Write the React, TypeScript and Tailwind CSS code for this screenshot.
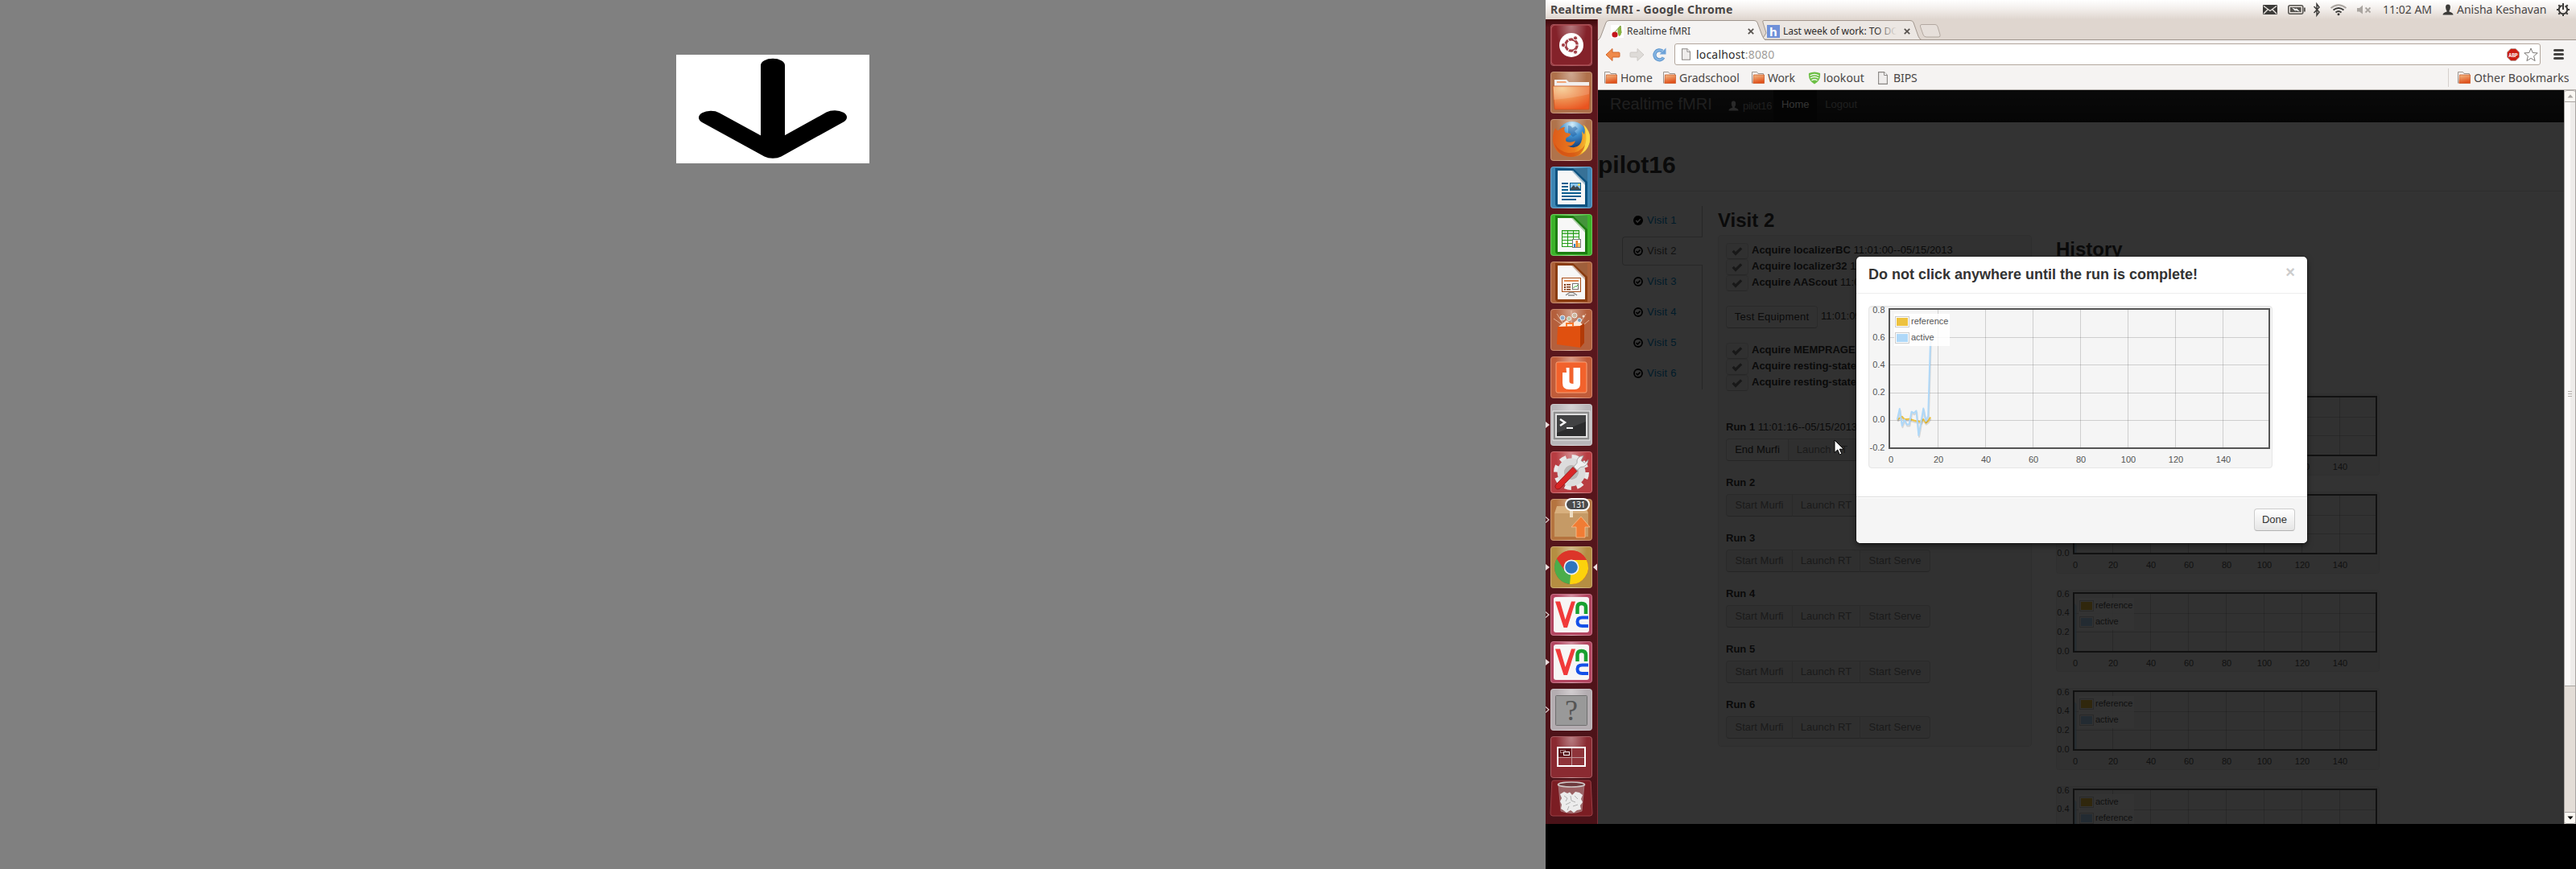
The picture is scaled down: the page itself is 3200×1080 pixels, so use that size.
import React from "react";

type Kids = { children?: React.ReactNode };

/* ---------- launcher ---------- */

function Tile({
  bg,
  children,
  pip,
  active,
}: Kids & { bg: string; pip?: "full" | "hollow"; active?: boolean }) {
  return (
    <div className="relative flex h-[59px] w-[64px] shrink-0 items-start">
      <div className="flex h-[52px] w-[6px] items-center">
        {pip && (
          <svg width="6" height="10" viewBox="0 0 6 10">
            {pip === "full" ? (
              <path d="M0 1 L5 5 L0 9Z" fill="#e8dcdc" />
            ) : (
              <path d="M0 1.5 L4 5 L0 8.5" fill="none" stroke="#e0d4d4" strokeWidth="1.2" />
            )}
          </svg>
        )}
      </div>
      <div className={"relative h-[52px] w-[52px] overflow-hidden rounded-[4px] " + bg}>
        <div className="absolute inset-0 rounded-[4px] border border-white/25 bg-[radial-gradient(ellipse_at_50%_0%,rgba(255,255,255,0.4),rgba(255,255,255,0)_55%)]" />
        <svg className="relative block" width="52" height="52" viewBox="0 0 52 52">
          {children}
        </svg>
      </div>
      {active && (
        <svg className="mt-[21px] ml-px" width="5" height="10" viewBox="0 0 5 10">
          <path d="M5 0.5 L0 5 L5 9.5Z" fill="#e8dcdc" />
        </svg>
      )}
    </div>
  );
}

function OfficePage({ color, children }: Kids & { color: string }) {
  return (
    <>
      <path d="M6 2H46V50H10Q6 50 6 46Z" fill={color} />
      <path d="M28 2H46V19Z" fill="#fff" opacity="0.18" />
      <path d="M9 5H28L43 20V47H9Z" fill="#f7f7f7" />
      <path d="M28 5L43 20L43 23L26 5Z" fill={color} opacity="0.35" />
      {children}
    </>
  );
}

function Vnc() {
  return (
    <>
      <rect x="4" y="4" width="44" height="44" rx="3" fill="#f7f5f5" />
      <path d="M6 9.5H12L18.500 32L26 9.500H31L21 42H16.500Z" fill="#f13a3a" />
      <path d="M33.500 25V17Q33.500 12 38.500 12Q44 12 44 17V25" fill="none" stroke="#18a030" strokeWidth="4.500" />
      <path d="M47 29.500H39.500Q33.500 29.500 33.500 34.500Q33.500 40 39.500 40H47" fill="none" stroke="#1450e8" strokeWidth="4" />
    </>
  );
}

function Launcher() {
  return (
    <div className="flex h-[1000px] w-[65px] flex-col border-r border-[#7b2d36] bg-[#56161c] bg-[linear-gradient(to_bottom,#3c080c,#5b161c_10px,#59171d_50%,#4a1218)] pt-[6px]">
      <Tile bg="bg-[#84222a]">
        <rect x="1" y="1" width="50" height="50" rx="5" fill="none" stroke="#a84a50" strokeWidth="1.500" />
        <circle cx="26" cy="26" r="15" fill="#fff" />
        <circle cx="26" cy="26" r="7.200" fill="none" stroke="#a24047" strokeWidth="3.200" />
        <path d="M26 26L20.500 16.500M26 26H37M26 26L20.500 35.500" stroke="#fff" strokeWidth="1.200" />
        <circle cx="26" cy="26" r="5" fill="#fff" />
        <circle cx="16" cy="26" r="2.600" fill="#a24047" stroke="#fff" strokeWidth="1" />
        <circle cx="31" cy="17.300" r="2.600" fill="#a24047" stroke="#fff" strokeWidth="1" />
        <circle cx="31" cy="34.700" r="2.600" fill="#a24047" stroke="#fff" strokeWidth="1" />
      </Tile>
      <Tile bg="bg-[#b0714b]">
        <path d="M5 10H20L23 13H48V20H5Z" fill="#f2efee" />
        <path d="M8 12H19L20 14H8Z" fill="#f1a677" />
        <path d="M3 18H49L48 46Q48 47 47 47H6Q5 47 5 46Z" fill="url(#folderBig)" stroke="#c9541f" strokeWidth="0.800" />
        <path d="M3.500 18.500H48.500L48 28Q28 33 4 35Z" fill="#fff" opacity="0.15" />
        <defs>
          <radialGradient id="folderBig" cx="0.25" cy="0.1" r="1">
            <stop offset="0" stopColor="#f6c98c" />
            <stop offset="0.5" stopColor="#ee8e50" />
            <stop offset="1" stopColor="#ea5420" />
          </radialGradient>
        </defs>
      </Tile>
      <Tile bg="bg-[#b0734b]">
        <defs>
          <radialGradient id="ffGlobe" cx="0.5" cy="0.1" r="0.9">
            <stop offset="0" stopColor="#d5eefa" />
            <stop offset="0.45" stopColor="#3f8fce" />
            <stop offset="1" stopColor="#0a2b66" />
          </radialGradient>
          <linearGradient id="ffFox" x1="0" y1="0" x2="1" y2="0.1">
            <stop offset="0" stopColor="#dd5a1a" />
            <stop offset="0.65" stopColor="#ea7a1e" />
            <stop offset="1" stopColor="#f8c630" />
          </linearGradient>
        </defs>
        <circle cx="27" cy="21" r="18" fill="url(#ffGlobe)" />
        <path d="M22 8q4 0 5 3l4-2 3 3-4 3 3 4-5 3-6-5z" fill="#0f4a92" opacity="0.4" />
        <path d="M6 11Q8 15 10 14Q13 10 18 10Q16 14 19 17L25 18Q25 21 20 23Q18 26 20 28Q25 30 31 27Q28 35 21 33Q30 38 36 32Q41 26 39 15L42 19Q44 13 41 7Q52 17 48 31Q43 46 26 47Q9 47 4 32Q1 21 6 11Z" fill="url(#ffFox)" />
        <path d="M41 7Q52 17 48 31Q45 40 37 43Q44 34 44.500 25Q44.500 14 41 7Z" fill="#fbd94a" />
        <path d="M5 30Q10 40 22 42Q36 43 43 32Q40 47 25 47Q9 46 5 30Z" fill="#c8400e" opacity="0.5" />
      </Tile>
      <Tile bg="bg-[#3e86b4]">
        <OfficePage color="#0c5280">
          <g fill="#0c5f90">
            <rect x="14" y="20" width="8" height="2" /><rect x="14" y="24" width="8" height="2" /><rect x="14" y="28" width="8" height="2" />
            <rect x="14" y="32" width="24" height="2" /><rect x="14" y="36" width="24" height="2" /><rect x="14" y="40" width="18" height="2" />
            <rect x="24" y="20" width="14" height="10" />
          </g>
          <rect x="25" y="21" width="12" height="8" fill="#8cc5ec" />
          <path d="M25 29V27L29 23L31 26L33 24L37 28V29Z" fill="#3f4a50" />
          <circle cx="35.500" cy="22.500" r="1.500" fill="#f4dc5c" />
        </OfficePage>
      </Tile>
      <Tile bg="bg-[#3cb32a]">
        <OfficePage color="#1c7d10">
          <rect x="14" y="20" width="22" height="21" fill="#1f9a12" />
          <g fill="#fff">
            {[21, 25, 29, 33, 37].map((y, r) => (
              <g key={y}>
                <rect x="15" y={y} width="6" height="3" opacity={r ? 1 : 0.7} /><rect x="22" y={y} width="6" height="3" opacity={r ? 1 : 0.7} /><rect x="29" y={y} width="6" height="3" opacity={r ? 1 : 0.7} />
              </g>
            ))}
          </g>
          <rect x="27.500" y="31.500" width="10" height="10" fill="#fff" stroke="#777" />
          <rect x="29" y="37" width="2" height="4" fill="#1d86c8" /><rect x="31.500" y="33" width="2.500" height="8" fill="#e8802a" /><rect x="34.500" y="36" width="2" height="5" fill="#e8b02a" />
        </OfficePage>
      </Tile>
      <Tile bg="bg-[#ad6139]">
        <OfficePage color="#8a3c10">
          <rect x="14.500" y="20.500" width="23" height="17" fill="#fdf3ec" stroke="#a8501c" />
          <rect x="17" y="23" width="18" height="2" fill="#e08a50" />
          <g fill="#7c3a18"><rect x="17" y="28" width="2" height="2" /><rect x="17" y="31" width="2" height="2" /><rect x="17" y="34" width="2" height="1.500" /><rect x="20" y="28" width="5" height="1.500" /><rect x="20" y="31" width="5" height="1.500" /><rect x="20" y="34" width="5" height="1.500" /></g>
          <rect x="27.500" y="27.500" width="7" height="7" fill="#fff" stroke="#777" />
          <path d="M28.500 33L31 30.500L32 31.500L34 29" stroke="#28a028" fill="none" />
          <path d="M19 42L24 38.500H28L33 42M22 42h8" stroke="#8a8a8a" fill="none" strokeWidth="1.500" />
        </OfficePage>
      </Tile>
      <Tile bg="bg-[#b4603d]">
        <path d="M8 6L20 24M44 6L34 22M26 2V22M4 12L18 22M48 14L36 24" stroke="#f3d2bb" strokeWidth="1" opacity="0.7" />
        <path d="M10 22L20 14L26 19L34 13L42 22Z" fill="#fde9d8" />
        <circle cx="15" cy="11" r="3" fill="#8aa9c8" stroke="#eee" /><circle cx="23" cy="12" r="2.500" fill="#b8c8a8" stroke="#eee" />
        <circle cx="30" cy="8" r="3" fill="#cdb8a0" stroke="#eee" /><circle cx="36" cy="14" r="2.500" fill="#7fa0b8" stroke="#eee" /><circle cx="41" cy="9" r="1.500" fill="#f0e0d0" />
        <path d="M9 22L37 21L42 18V42L37 48L8 44Z" fill="#e0500f" />
        <path d="M37 21L42 18V42L37 48Z" fill="#b23a08" />
        <path d="M20 22V18H28V22" stroke="#fa7a2c" strokeWidth="2" fill="none" />
      </Tile>
      <Tile bg="bg-[#c05c3a]">
        <rect x="7" y="7" width="38" height="38" rx="2" fill="#f2622c" stroke="#f9a074" />
        <path d="M19.500 14H23.500V31Q23.500 34 28.500 34V14H37V34Q37 41 30 41H23Q15 41 15 33V20H20Z" fill="#fff" />
      </Tile>
      <Tile bg="bg-[#b9b6b9]" pip="full">
        <rect x="3" y="9" width="46" height="36" fill="#8d8d8d" stroke="#eee" />
        <rect x="6" y="12" width="40" height="30" fill="#dedede" />
        <rect x="8" y="14" width="36" height="26" fill="#2c2d2e" />
        <path d="M8 14H44V22L8 36Z" fill="#fff" opacity="0.1" />
        <path d="M12 19L18 23L12 27" fill="none" stroke="#f4f4f4" strokeWidth="2.500" />
        <rect x="20" y="29" width="8" height="2" fill="#f4f4f4" />
      </Tile>
      <Tile bg="bg-[#b83d42]">
        <circle cx="26" cy="26" r="19" fill="none" stroke="#e8e8e8" strokeWidth="6" strokeDasharray="8 6.920" />
        <circle cx="26" cy="26" r="13" fill="none" stroke="#dcdcdc" strokeWidth="9" />
        <circle cx="26" cy="26" r="9" fill="#b9b7b5" />
        <path d="M7 41L28 19.500L33 24.500L12 46Q8 48 6.500 45.500Q5 43.500 7 41Z" fill="#d82626" stroke="#8c1414" strokeWidth="0.800" />
        <path d="M29 19L33 23.500L37.500 19.500Q46 19.500 47 10.500L42.500 14.500L38 11.500L41 5.500Q32 6 33 14.500Z" fill="#f0f0f0" stroke="#999" strokeWidth="0.800" />
      </Tile>
      <div className="relative">
        <Tile bg="bg-[#b5743f]" pip="hollow">
          <path d="M8 9H44L47 18H5Z" fill="#d8b07e" />
          <rect x="5" y="18" width="42" height="29" fill="#c59a66" />
          <rect x="24" y="9" width="4" height="14" fill="#eddcc0" />
          <path d="M38 22L49 35H43V48H32V35H26Z" fill="#f17c34" stroke="#fbc090" strokeWidth="0.800" />
        </Tile>
        <div className="absolute top-[-1px] left-[24px] flex h-[16px] w-[31px] items-center justify-center rounded-full border-2 border-white bg-[#4b4b4d] pl-[3px] font-['Noto_Sans',sans-serif] text-[10px] leading-none text-white">
          131
        </div>
      </div>
      <Tile bg="bg-[#b58e42]" pip="full" active>
        <circle cx="26" cy="26" r="21" fill="#dc3529" />
        <path d="M26 26L7.800 15.500A21 21 0 0 0 24 46.900L35 31Z" fill="#4bad4a" />
        <path d="M26 26L24 46.900A21 21 0 0 0 44.900 17L26 17Z" fill="#fcd20c" />
        <path d="M26 17H44.900A21 21 0 0 0 7.800 15.500L17.500 30Z" fill="#dc3529" />
        <circle cx="26" cy="26" r="9.500" fill="#eef2f6" />
        <circle cx="26" cy="26" r="7.800" fill="#2f74bd" />
      </Tile>
      <Tile bg="bg-[#b34560]" pip="hollow"><Vnc /></Tile>
      <Tile bg="bg-[#b34560]" pip="full"><Vnc /></Tile>
      <Tile bg="bg-[#b4adb1]" pip="hollow">
        <rect x="6.500" y="8.500" width="39" height="37" rx="1" fill="#999" stroke="#6f6f6f" />
        <text x="26" y="39" textAnchor="middle" className="font-['Liberation_Serif',serif] text-[36px]" fill="#555">?</text>
      </Tile>
      <div className="h-[54px] overflow-hidden">
        <Tile bg="bg-[#8a2a31]">
          <rect x="9" y="14" width="34" height="23" fill="#8f343a" stroke="#fff" strokeWidth="2" />
          <rect x="10" y="15" width="15.500" height="10.500" fill="#5a1218" />
          <path d="M26.500 15V36M10 26.500H42" stroke="#c0989a" strokeWidth="1" />
          <rect x="12.500" y="17.500" width="6" height="3" fill="none" stroke="#a57c7e" />
          <rect x="16.500" y="19.500" width="7" height="4" fill="#5a1218" stroke="#fff" />
        </Tile>
      </div>
      <svg className="ml-[5px] block shrink-0" width="54" height="46" viewBox="0 0 54 46">
        <path d="M5 1H49Q51 1 51.200 3L53 42Q53 45 50 45H4Q1 45 1 42L2.800 3Q3 1 5 1Z" fill="#7b1d23" stroke="#9a4046" />
        <path d="M11 6L14 39Q27 44 40 39L43 6Z" fill="#b9a4a3" opacity="0.5" stroke="#ddd" strokeWidth="0.800" />
        <path d="M13 18L18 15L22 17L25 15.500L28 19L32 15L37 16L41 19L39 24L41 28L38 32L39 37L34 38L30 41L26 38L21 41L17 38L14 36L15 31L13 27L15 23Z" fill="#ececec" />
        <path d="M18 20l4 3l-2 4M31 20l4 4M20 31l6-3M29 33l6-2M22 38l2-5M26 20l1 6l5 2" stroke="#b0b0b0" fill="none" />
        <ellipse cx="27" cy="6" rx="16.500" ry="3" fill="#6d3a3d" stroke="#cfc8c6" strokeWidth="1.600" />
      </svg>
    </div>
  );
}

/* ---------- top panel ---------- */

function TopPanel() {
  return (
    <div className="flex h-[24px] w-full items-center bg-[linear-gradient(to_bottom,#ffffff,#f3efec_45%,#dfd6cf)] font-['Noto_Sans',sans-serif] text-[14px] leading-none text-[#4a4746]">
      <div className="ml-[6px] text-[14px] font-bold tracking-[0.280px] whitespace-nowrap">Realtime fMRI - Google Chrome</div>
      <svg className="ml-auto" width="140" height="24" viewBox="0 0 140 24">
        <rect x="1" y="6" width="18" height="12" rx="1" fill="#3c3b39" />
        <path d="M2 7.500L10 13.500L18 7.500M2 17L7 12M18 17L13 12" stroke="#eee9e5" strokeWidth="1.300" fill="none" />
        <rect x="32.800" y="6.800" width="18" height="10.400" rx="2" fill="#e8e2dd" stroke="#55534f" strokeWidth="1.500" />
        <rect x="35" y="9" width="13.500" height="6" fill="#55534f" />
        <rect x="52" y="9.500" width="1.800" height="5" fill="#55534f" />
        <path d="M37 9.500L43 11.500L42 9.500L47 14.500L41 12.500L42 14.500Z" fill="#fff" />
        <path d="M64.500 8L71 15L68 19V5L71 9L64.500 16" fill="none" stroke="#3c3b39" strokeWidth="1.500" />
        <path d="M85.500 10Q95 2.500 104.500 10" fill="none" stroke="#aaa5a0" strokeWidth="1.800" />
        <path d="M88.500 12.500Q95 7.500 101.500 12.500M91.500 15.500Q95 12.500 98.500 15.500" fill="none" stroke="#3c3b39" strokeWidth="1.800" />
        <circle cx="95" cy="17.800" r="1.500" fill="#3c3b39" />
        <path d="M118 10H121L125 6.500V17.500L121 14.500H118Z" fill="#aaa5a0" />
        <path d="M128.500 9.500L134.500 15.500M134.500 9.500L128.500 15.500" stroke="#aaa5a0" strokeWidth="1.800" />
      </svg>
      <span className="ml-[10px] w-[74px] whitespace-nowrap">11:02 AM</span>
      <svg width="14" height="14" viewBox="0 0 14 14" className="mr-[4px]">
        <path d="M7 0.500C9.500 0.500 10.200 2.500 9.800 5Q9.500 7.500 8.500 8.500V9.500Q13.500 11 13.500 13.500H0.500Q0.500 11 5.500 9.500V8.500Q4.500 7.500 4.200 5C3.800 2.500 4.500 0.500 7 0.500Z" fill="#3c3b39" />
      </svg>
      <span className="w-[124px] whitespace-nowrap">Anisha Keshavan</span>
      <svg className="mr-[8px]" width="16" height="16" viewBox="0 0 16 16">
        <circle cx="8" cy="8" r="5.200" fill="none" stroke="#3c3b39" strokeWidth="2" strokeDasharray="28.600 4" strokeDashoffset="-26.500" />
        <path d="M8 0V8" stroke="#3c3b39" strokeWidth="2" />
        <path d="M0 8H3M13 8H16M8 13V16M2.300 2.300L4.300 4.300M13.700 2.300L11.700 4.300M2.300 13.700L4.300 11.700M13.700 13.700L11.700 11.700" stroke="#3c3b39" strokeWidth="2" />
      </svg>
    </div>
  );
}

/* ---------- browser chrome ---------- */

function TabClose() {
  return (
    <svg width="8" height="8" viewBox="0 0 8 8" className="shrink-0">
      <path d="M0.800 0.800L7.200 7.200M7.200 0.800L0.800 7.200" stroke="#55504c" strokeWidth="1.700" />
    </svg>
  );
}

function TabStrip() {
  return (
    <div className="relative h-[26px] w-full bg-[#dfd6cf] font-['Noto_Sans',sans-serif] text-[12px] text-[#3b3937]">
      <svg className="absolute inset-0" width="1215" height="26" viewBox="0 0 1215 26">
        <path d="M0 25.500H1215" stroke="#9f958d" />
        <path d="M196 25L204 25L209 17L205 4Q204 1.500 206 1.500H388Q391 1.500 392 4L398 21Q399.500 25 402 25.500Z" fill="#ece7e3" stroke="#a3988f" />
        <path d="M402 6.500H419Q421 6.500 422 9L425 19Q426 22 423 22H408Q405 22 404 19L400.500 9Q400 6.500 402 6.500Z" fill="#e6dfda" stroke="#b3a9a1" />
        <path d="M0 26Q3 24 4 20L10 4Q11 1.500 14 1.500H194Q197 1.500 198 4L204 20Q206 25.500 209 26Z" fill="#f5f3f2" stroke="#9f958d" />
        <rect x="1" y="25" width="206" height="1" fill="#f5f3f2" />
      </svg>
      <div className="relative flex h-full items-center pt-[5px] pb-[1px] leading-none">
        <svg className="ml-[16px]" width="16" height="16" viewBox="0 0 16 16">
          <rect width="16" height="16" fill="#fff" />
          <circle cx="5" cy="12" r="3.600" fill="#c4161c" />
          <path d="M5 9L12 1L13 10" stroke="#6b8a30" fill="none" />
          <path d="M12 1Q6 6 10 14Q14 13 13 6Z" fill="#8ab340" />
        </svg>
        <span className="ml-[4px] w-[150px] whitespace-nowrap">Realtime fMRI</span>
        <TabClose />
        <div className="ml-[16px] flex h-[16px] w-[16px] items-center justify-center bg-[#6f90d8] font-['Noto_Sans',sans-serif] text-[15px] leading-none font-bold text-white">h</div>
        <div className="relative ml-[4px] w-[150px] py-[2px] whitespace-nowrap text-[#2e2c2b]">
          <div className="tracking-[-0.050px]">Last week of work: TO DO</div>
          <div className="absolute inset-y-0 left-[115px] w-[26px] bg-gradient-to-r from-transparent to-[#ece7e3]" />
          <div className="absolute inset-y-0 left-[141px] w-[9px] bg-[#ece7e3]" />
        </div>
        <TabClose />
      </div>
    </div>
  );
}

function Folder() {
  return (
    <svg width="16" height="15" viewBox="0 0 16 15" className="shrink-0">
      <path d="M0.500 14.500V0.500H6.500L8 2.500H14.500V5" fill="#f4f1ef" stroke="#9c958f" />
      <path d="M2.500 4H15.500V14.500H1.800Z" fill="url(#fold)" stroke="#c9501c" strokeWidth="0.700" />
      <defs>
        <linearGradient id="fold" x1="0" y1="0" x2="0.300" y2="1">
          <stop offset="0" stopColor="#f3bd88" />
          <stop offset="1" stopColor="#e0511b" />
        </linearGradient>
      </defs>
    </svg>
  );
}

function PageIcon({ w = 12, h = 16 }: { w?: number; h?: number }) {
  return (
    <svg width={w} height={h} viewBox="0 0 12 16" className="shrink-0">
      <path d="M0.600 0.600H7.500L11.400 4.500V15.400H0.600Z" fill="#efedec" stroke="#8a8784" strokeWidth="1.100" />
      <path d="M7.500 0.600V4.500H11.400" fill="#fff" stroke="#8a8784" strokeWidth="1" />
    </svg>
  );
}

function Toolbar() {
  return (
    <div className="flex h-[35px] items-center bg-[#f5f3f2]">
      <svg className="ml-[9px]" width="76" height="20" viewBox="0 0 76 20">
        <path d="M1 10L9 2.500V7H17Q18 7 18 8V12Q18 13 17 13H9V17.500Z" fill="#ef8a4a" stroke="#cf5f22" strokeWidth="0.900" strokeLinejoin="round" />
        <path d="M48 10L40 2.500V7H32Q31 7 31 8V12Q31 13 32 13H40V17.500Z" fill="#dedbd8" stroke="#cbc7c3" strokeWidth="0.900" strokeLinejoin="round" />
        <path d="M72.500 13.500A6 6 0 1 1 71 5.500" fill="none" stroke="#5d94cd" strokeWidth="4.200" />
        <path d="M72.500 13.500A6 6 0 1 1 71 5.500" fill="none" stroke="#86b5e2" strokeWidth="2.200" />
        <path d="M75.500 1.500V9.500H67.500Z" fill="#6ea3d9" />
      </svg>
      <div className="ml-[10px] flex h-[27px] w-[1076px] items-center rounded-[3px] border border-[#b3a79d] bg-white pl-[8px]">
        <PageIcon w={11} h={15} />
        <span className="ml-[7px] font-['Noto_Sans',sans-serif] text-[14px] leading-none tracking-[0.180px] text-[#2e2c2b]">
          localhost<span className="text-[#a19d9a]">:8080</span>
        </span>
        <svg className="mr-[5px] ml-auto" width="16" height="16" viewBox="0 0 16 16">
          <path d="M5 0.500H11L15.500 5V11L11 15.500H5L0.500 11V5Z" fill="#cc1f12" stroke="#a9a5a1" strokeWidth="0.700" />
          <text x="8" y="10.800" textAnchor="middle" textLength="11.500" lengthAdjust="spacingAndGlyphs" className="font-['Liberation_Sans',sans-serif] text-[8px] font-bold" fill="#fff">ABP</text>
        </svg>
        <svg className="mr-[2px]" width="18" height="18" viewBox="0 0 18 18">
          <path d="M9 1L11.200 6.500L17.200 6.900L12.600 10.700L14.100 16.600L9 13.400L3.900 16.600L5.400 10.700L0.800 6.900L6.800 6.500Z" fill="#fff" stroke="#7b7875" />
        </svg>
      </div>
      <div className="ml-[16px] flex flex-col gap-[2px]">
        <div className="h-[3px] w-[13px] rounded-full bg-[#454341]" />
        <div className="h-[3px] w-[13px] rounded-full bg-[#454341]" />
        <div className="h-[3px] w-[13px] rounded-full bg-[#454341]" />
      </div>
    </div>
  );
}

function Bookmarks() {
  return (
    <div className="flex h-[27px] items-center border-b border-[#b9b4b0] bg-[#f5f3f2] pb-[3px] pl-[8px] font-['Noto_Sans',sans-serif] text-[14px] leading-none text-[#4a4746]">
      <Folder /><span className="ml-[4px] w-[53px]">Home</span>
      <Folder /><span className="ml-[4px] w-[90px]">Gradschool</span>
      <Folder /><span className="ml-[4px] w-[50px] tracking-[-0.200px]">Work</span>
      <svg width="16" height="16" viewBox="0 0 16 16">
        <path d="M1 2Q8 -1 15 2Q16 11 8 15.500Q0 11 1 2Z" fill="#6cbf45" />
        <path d="M2.500 5Q8 2 13.500 5M3 8Q8 5 13 8M4.500 11Q8 8.500 11.500 11" stroke="#f2f7ee" strokeWidth="1.400" fill="none" />
      </svg>
      <span className="ml-[3px] w-[67px] tracking-[0.100px]">lookout</span>
      <PageIcon w={14} h={16} /><span className="ml-[6px] tracking-[-0.100px]">BIPS</span>
      <div className="mr-[11px] ml-auto h-[23px] w-px bg-[#d5d0cc]" />
      <Folder /><span className="ml-[4px] w-[127px] tracking-[0.150px] whitespace-nowrap">Other Bookmarks</span>
    </div>
  );
}

function Scrollbar() {
  return (
    <div className="flex h-full w-[15px] flex-col border-x border-[#a9a5a2] bg-[#e3ddd7]">
      <div className="flex h-[15px] items-center justify-center rounded-t-[3px] border-t border-b border-[#a9a5a2] bg-[#fbf8f3]">
        <svg width="8" height="5" viewBox="0 0 8 5"><path d="M4 0.500L7.500 4.500H0.500Z" fill="#a9a5a2" /></svg>
      </div>
      <div className="flex h-[726px] items-center justify-center border-b border-[#a9a5a2] bg-[linear-gradient(to_right,#fbf9f8_50%,#eeecea_50%)]">
        <div className="flex flex-col gap-[2px]">
          <div className="h-px w-[5px] bg-[#b5b0ac]" /><div className="h-px w-[5px] bg-[#b5b0ac]" /><div className="h-px w-[5px] bg-[#b5b0ac]" />
        </div>
      </div>
      <div className="flex-1" />
      <div className="flex h-[15px] items-center justify-center rounded-b-[3px] border-t border-b border-[#a9a5a2] bg-[#fbf8f3]">
        <svg width="8" height="5" viewBox="0 0 8 5"><path d="M4 4.500L7.500 0.500H0.500Z" fill="#000" /></svg>
      </div>
    </div>
  );
}

/* ---------- plots ---------- */

type PlotProps = {
  w: number;
  h: number;
  left: number;
  top: number;
  right: number;
  bottom: number;
  xStep: number;
  yLabels: string[];
  xLabelY: number;
  legend: string[];
  legendX: number;
  legendY: number;
  children?: React.ReactNode;
};

function Plot(p: PlotProps) {
  const yStep = (p.bottom - p.top) / (p.yLabels.length - 1);
  return (
    <svg className="block font-['Liberation_Sans',sans-serif] text-[11px]" width={p.w} height={p.h} viewBox={`0 0 ${p.w} ${p.h}`}>
      {[1, 2, 3, 4, 5, 6, 7].map((i) => (
        <rect key={i} x={Math.round(p.left + i * p.xStep)} y={p.top} width="1" height={p.bottom - p.top} fill="#545454" fillOpacity="0.24" />
      ))}
      {p.yLabels.slice(1, -1).map((l, i) => (
        <rect key={l} x={p.left} y={Math.round(p.top + (i + 1) * yStep)} width={p.right - p.left} height="1" fill="#545454" fillOpacity="0.24" />
      ))}
      {p.children}
      <rect x={p.left - 1} y={p.top - 1} width={p.right - p.left + 2} height={p.bottom - p.top + 2} fill="none" stroke="#545454" strokeWidth="2" />
      {p.yLabels.map((l, i) => (
        <text key={l} x={p.left - 6.500} y={p.top + i * yStep + 3.500} textAnchor="end" fill="#545454">{l}</text>
      ))}
      {[0, 1, 2, 3, 4, 5, 6, 7].map((i) => (
        <text key={i} x={p.left + i * p.xStep + 1} y={p.xLabelY} textAnchor="middle" fill="#545454">{i * 20}</text>
      ))}
      <rect x={p.legendX} y={p.legendY} width="69" height="40" fill="#fff" fillOpacity="0.85" />
      {p.legend.map((l, i) => (
        <g key={l}>
          <rect x={p.legendX + 1.500} y={p.legendY + 3.500 + i * 20} width="17" height="13" fill="#fff" stroke="#ccc" />
          <rect x={p.legendX + 3} y={p.legendY + 5 + i * 20} width="14" height="10" fill={i ? "#afd8f8" : "#edc240"} />
          <text x={p.legendX + 21} y={p.legendY + 13 + i * 20} fill="#545454">{l}</text>
        </g>
      ))}
    </svg>
  );
}

function HistoryPlot({ legend }: { legend: string[] }) {
  return (
    <div className="h-[102px] w-[402px] shrink-0 rounded-[4px] bg-[#f5f5f5] shadow-[inset_0_0_0_1px_#ececec]">
      <Plot w={402} h={102} left={23} top={5} right={397} bottom={76} xStep={47} yLabels={["0.6", "0.4", "0.2", "0.0"]} xLabelY={95} legend={legend} legendX={28} legendY={10}>
        <path d="M23 76V17L25.500 20V76Z" fill="#afd8f8" fillOpacity="0.8" />
      </Plot>
    </div>
  );
}

const ACTIVE = [0, 0.08, -0.045, 0, -0.035, -0.035, 0.058, 0.048, 0.065, -0.115, -0.02, 0.082, -0.01, 0.025, 0.6];
const REFERENCE = [0, 0.01, 0.022, 0.003, 0.003, 0.005, 0, -0.006, -0.01, -0.012, -0.02, 0.003, -0.024, -0.012, 0.018];

function toPath(values: number[], dx = 0, dy = 0) {
  return values.map((v, i) => `${i ? "L" : "M"}${27 + (i + 3) * 2.95 + dx} ${141.5 - v * 170 + dy}`).join(" ");
}

function Modal() {
  return (
    <div className="absolute top-[207px] left-[321px] flex h-[356px] w-[560px] flex-col rounded-[5px] bg-white shadow-[0_0_0_1px_rgba(0,0,0,0.3),0_3px_7px_rgba(0,0,0,0.5)]">
      <div className="flex h-[46px] items-start border-b border-[#eee] px-[15px] pt-[9px]">
        <h3 className="text-[18px] leading-[27px] font-bold whitespace-nowrap text-[#333]">Do not click anywhere until the run is complete!</h3>
        <span className="ml-auto pt-px text-[20px] leading-[18px] font-bold text-[#ccc]">×</span>
      </div>
      <div className="flex-1 px-[15px] pt-[15px]">
        <div className="h-[202px] w-[502px] rounded-[4px] border border-[#e6e6e6] bg-[#f5f5f5] shadow-[inset_0_1px_1px_rgba(0,0,0,0.05)]">
          <Plot w={500} h={200} left={26} top={4} right={496} bottom={175} xStep={59} yLabels={["0.8", "0.6", "0.4", "0.2", "0.0", "-0.2"]} xLabelY={194} legend={["reference", "active"]} legendX={31} legendY={9}>
            <g fill="none" strokeLinejoin="round" transform="translate(-1,-1)">
              <path d={toPath(REFERENCE, 0.5, 2)} stroke="#000" strokeOpacity="0.12" strokeWidth="2" />
              <path d={toPath(REFERENCE)} stroke="#edc240" strokeWidth="2" />
              <path d={toPath(ACTIVE, 0.7, 2)} stroke="#000" strokeOpacity="0.12" strokeWidth="2" />
              <path d={toPath(ACTIVE)} stroke="#afd8f8" strokeWidth="2" />
            </g>
          </Plot>
        </div>
      </div>
      <div className="flex h-[58px] justify-end rounded-b-[5px] border-t border-[#ddd] bg-[#f5f5f5] pt-[14px] pr-[15px] shadow-[inset_0_1px_0_#fff]">
        <div className="flex h-[28px] w-[51px] items-center justify-center rounded-[4px] border border-[#ccc] border-b-[#b3b3b3] bg-gradient-to-b from-white to-[#e6e6e6] text-[13px] leading-[18px] text-[#333]">Done</div>
      </div>
    </div>
  );
}

/* ---------- page ---------- */

function CheckRow({ label, time }: { label: string; time?: string }) {
  return (
    <div className="flex h-[20px] items-start">
      <div className="flex h-[20px] w-[28px] items-center justify-center rounded-[4px] border border-[#d8d8d8] border-b-[#c4c4c4] bg-[#f0f0f0]">
        <svg width="14" height="11" viewBox="0 0 14 11">
          <path d="M0.500 6L2.800 3.700L5 6L11 0.300L13.300 2.500L5 10.700Z" fill="#777" />
        </svg>
      </div>
      <div className="ml-[4px] leading-[18px] whitespace-nowrap">
        <b>{label}</b> <span>{time}</span>
      </div>
    </div>
  );
}

const seg = "flex h-[28px] items-center justify-center border border-[#d0d0d0] border-b-[#b8b8b8] leading-[18px] whitespace-nowrap";

function Run({ n, first }: { n: number; first?: boolean }) {
  return (
    <div className="h-[69px]">
      <div className="leading-[18px]">
        <b>Run {n}</b>
        {first && <span> 11:01:16--05/15/2013</span>}
      </div>
      <div className="mt-[5px] flex">
        {first ? (
          <div className={seg + " w-[78px] rounded-l-[4px] bg-[#f4f4f4] text-[#333]"}>End Murfi</div>
        ) : (
          <div className={seg + " w-[83px] rounded-l-[4px] bg-[#ebebeb] text-[#848484]"}>Start Murfi</div>
        )}
        <div className={seg + " -ml-px w-[85px] bg-[#ebebeb] text-[#848484]"}>Launch RT</div>
        <div className={seg + " -ml-px w-[88px] rounded-r-[4px] bg-[#ebebeb] text-[#848484]"}>{first ? "" : "Start Serve"}</div>
      </div>
    </div>
  );
}

function VisitTab({ n }: { n: number }) {
  const active = n === 2;
  return (
    <div className={"flex h-[36px] items-center pl-[13px] " + (active ? "relative -mr-px rounded-l-[4px] border border-r-0 border-[#c4c4c4] bg-white text-[#555]" : "ml-px text-[#0088cc]")}>
      <svg width="12" height="12" viewBox="0 0 12 12" className="mb-px">
        {n === 1 ? (
          <>
            <circle cx="6" cy="6" r="6" fill="#000" />
            <path d="M3.200 6L5.200 8L8.800 4.200" stroke="#fff" strokeWidth="1.600" fill="none" />
          </>
        ) : (
          <>
            <circle cx="6" cy="6" r="5" fill="none" stroke="#000" strokeWidth="1.800" />
            <path d="M3.500 6L5.300 7.800L8.500 4.600" stroke="#000" strokeWidth="1.600" fill="none" />
          </>
        )}
      </svg>
      <span className="ml-[5px] tracking-[0.200px]">Visit {n}</span>
    </div>
  );
}

function Page() {
  return (
    <div className="relative h-[912px] w-[1200px] overflow-hidden bg-white font-['Liberation_Sans',Arial,sans-serif] text-[13px] leading-[18px] text-[#333]">
      <div className="flex h-[40px] items-start bg-gradient-to-b from-[#333] to-[#1c1c1c] text-[#999]">
        <span className="ml-[15px] w-[147px] pt-[6px] text-[20px] leading-[23px] whitespace-nowrap">Realtime fMRI</span>
        <svg className="mt-[13px]" width="13" height="13" viewBox="0 0 14 14">
          <path d="M7 0.500C9.500 0.500 10.200 2.500 9.800 5Q9.500 7.500 8.500 8.500V9.500Q13.500 11 13.500 13.500H0.500Q0.500 11 5.500 9.500V8.500Q4.500 7.500 4.200 5C3.800 2.500 4.500 0.500 7 0.500Z" fill="#d0d0d0" />
        </svg>
        <span className="mt-[11px] ml-[5px] w-[38px] text-[13px] tracking-[-0.300px]">pilot16</span>
        <span className="h-[40px] bg-[#141414] px-[10px] pt-[9px] tracking-[-0.100px] text-white">Home</span>
        <span className="px-[10px] pt-[9px]">Logout</span>
      </div>
      <div className="h-[86px] border-b border-[#e4e4e4] pt-[35px]">
        <h1 className="text-[30px] leading-[36px] font-bold">pilot16</h1>
      </div>
      <div className="flex items-start">
        <div className="mt-[18px] ml-[30px] flex h-[228px] w-[100px] flex-col gap-[2px] border-r border-[#c4c4c4]">
          {[1, 2, 3, 4, 5, 6].map((n) => <VisitTab key={n} n={n} />)}
        </div>
        <div className="mt-[18px] ml-[19px] w-[390px]">
          <h2 className="text-[24px] leading-[36px] font-bold">Visit 2</h2>
          <div className="h-[636px] rounded-[4px] border border-[#e6e6e6] bg-[#f5f5f5] p-[9px]">
            <CheckRow label="Acquire localizerBC" time="11:01:00--05/15/2013" />
            <CheckRow label="Acquire localizer32" time="11:01:03" />
            <CheckRow label="Acquire AAScout" time="11:01:05" />
            <div className="mt-[18px] flex items-start">
              <div className="flex h-[28px] w-[114px] items-center justify-center rounded-[4px] border border-[#d0d0d0] border-b-[#b0b0b0] bg-[#f6f6f6] tracking-[0.200px]">Test Equipment</div>
              <span className="mt-[4px] ml-[4px]">11:01:09</span>
            </div>
            <div className="mt-[18px] mb-[36px]">
              <CheckRow label="Acquire MEMPRAGE" />
              <CheckRow label="Acquire resting-state-1" />
              <CheckRow label="Acquire resting-state" />
            </div>
            <Run n={1} first />
            {[2, 3, 4, 5, 6].map((n) => <Run key={n} n={n} />)}
          </div>
        </div>
        <div className="mt-[54px] ml-[30px] w-[402px]">
          <h2 className="text-[24px] leading-[36px] font-bold">History</h2>
          <div className="mt-[161px] flex flex-col gap-[20px]">
            {[1, 2, 3, 4].map((n) => <HistoryPlot key={n} legend={["reference", "active"]} />)}
            <HistoryPlot legend={["active", "reference"]} />
          </div>
        </div>
      </div>
      <div className="absolute inset-0 bg-black/80" />
      <Modal />
      <svg className="absolute top-[434px] left-[293px]" width="14" height="22" viewBox="0 0 14 22">
        <path d="M1 1V16.500L4.700 13L7.300 19L9.800 17.900L7.300 12.200H12.300Z" fill="#fff" stroke="#000" strokeWidth="1" />
      </svg>
    </div>
  );
}

export default function App() {
  return (
    <div className="flex h-[1080px] w-[3200px] overflow-hidden bg-[#808080]">
      <div className="w-[1920px] shrink-0 pt-[68px] pl-[840px]">
        <div className="h-[135px] w-[240px] bg-white">
          <svg width="240" height="135" viewBox="0 0 240 240" preserveAspectRatio="none">
            <path d="M120 23.500V214M43 139L120 214L197 138" fill="none" stroke="#000" strokeWidth="30" strokeLinecap="round" strokeLinejoin="round" />
          </svg>
        </div>
      </div>
      <div className="flex w-[1280px] shrink-0 flex-col bg-black">
        <TopPanel />
        <div className="flex h-[1000px]">
          <Launcher />
          <div className="flex w-[1215px] flex-col">
            <TabStrip />
            <Toolbar />
            <Bookmarks />
            <div className="flex h-[912px]">
              <Page />
              <Scrollbar />
            </div>
          </div>
        </div>
      </div>
    </div>
  );
}
